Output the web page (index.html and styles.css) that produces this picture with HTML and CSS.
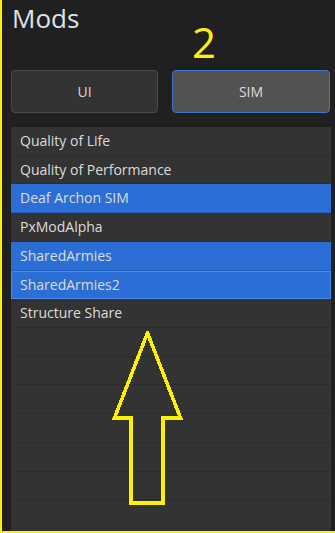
FILE: index.html
```html
<!DOCTYPE html>
<html lang="en">
<head>
    <meta charset="UTF-8">
    <meta name="viewport" content="width=device-width, initial-scale=1.0">
    <title>Mods</title>
    <link rel="stylesheet" href="styles.css">
</head>
<body>
    <div class="panel">
        <h1 class="title">Mods</h1>
        <span class="note">2</span>

        <div class="tabs">
            <button class="tab">UI</button>
            <button class="tab active">SIM</button>
        </div>

        <ul class="mod-list">
            <li class="mod">Quality of Life</li>
            <li class="mod">Quality of Performance</li>
            <li class="mod selected">Deaf Archon SIM</li>
            <li class="mod">PxModAlpha</li>
            <li class="mod selected">SharedArmies</li>
            <li class="mod selected focused">SharedArmies2</li>
            <li class="mod">Structure Share</li>
            <li class="mod"></li>
            <li class="mod"></li>
            <li class="mod"></li>
            <li class="mod"></li>
            <li class="mod"></li>
            <li class="mod"></li>
            <li class="mod"></li>
        </ul>

        <svg class="arrow" width="72" height="176" viewBox="0 0 72 176">
            <path d="M35.5 2 L2.5 87 L19 87 L19 172 L51 172 L51 87 L68.5 87 Z"
                  fill="none" stroke="#fff200" stroke-width="3.6" shape-rendering="crispEdges"/>
        </svg>
    </div>
</body>
</html>
```

FILE: styles.css
```css
:root {
    --background: #202020;
    --surface: #333333;
    --line: #2d2d2d;
    --text: #dcdcdc;
    --accent: #2b6fd6;
    --accent-edge: #4a8ae8;
    --marker: #fff200;
}

* {
    margin: 0;
    padding: 0;
    box-sizing: border-box;
}

body {
    background: var(--background);
    font-family: 'Open Sans', 'Noto Sans', sans-serif;
    color: var(--text);
}

.panel {
    position: relative;
    height: 533px;
    padding: 0 4px 0 9px;
    border-left: 2px solid var(--marker);
    border-bottom: 2px solid var(--marker);
    display: flex;
    flex-direction: column;
    overflow: hidden;
}

.title {
    font-size: 26px;
    font-weight: 400;
    line-height: 36px;
    padding-left: 1px;
    color: #dfe3ea;
}

.note {
    position: absolute;
    left: 190px;
    top: 16px;
    font-size: 42px;
    line-height: 52px;
    color: var(--marker);
}

.tabs {
    display: grid;
    grid-template-columns: 147px 1fr;
    gap: 14px;
    margin-top: 34px;
    padding-right: 1px;
}

.tab {
    height: 43px;
    background: #333333;
    border: 1px solid #4a4a4a;
    border-radius: 4px;
    color: var(--text);
    font-family: inherit;
    font-size: 14px;
}

.tab.active {
    background: #525252;
    border-color: #3b76d0;
}

.mod-list {
    list-style: none;
    margin-top: 14px;
    flex: 1;
    background: var(--surface);
    overflow: hidden;
}

.mod {
    height: 28.73px;
    padding-left: 9px;
    font-size: 14px;
    line-height: 28px;
    border-bottom: 1px solid var(--line);
    white-space: nowrap;
}

.mod.selected {
    background: var(--accent);
    border-bottom-color: #2560bd;
}

.mod.focused {
    border: 1px solid var(--accent-edge);
    line-height: 26px;
    padding-left: 8px;
}

.arrow {
    position: absolute;
    left: 110px;
    top: 331px;
}
```
